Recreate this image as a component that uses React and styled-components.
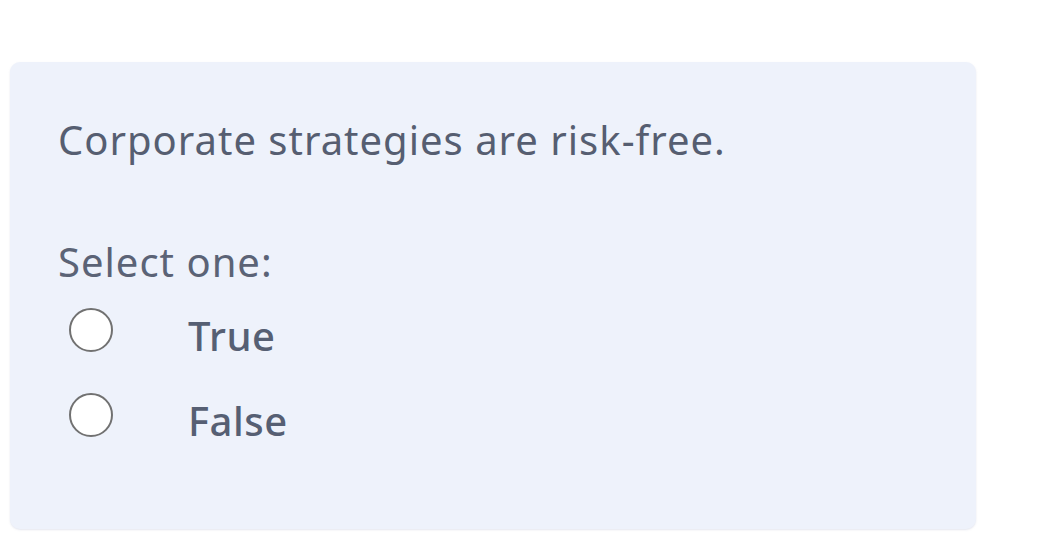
import React from 'react';
import styled, { createGlobalStyle } from 'styled-components';

const GlobalStyle = createGlobalStyle`
  body {
    margin: 0;
    background: #ffffff;
    font-family: "Noto Sans", "Open Sans", sans-serif;
  }
`

const Page = styled.div`
  width: 1054px;
  height: 548px;
  padding: 62px 0 0 10px;
  box-sizing: border-box;
`

const Card = styled.div`
  width: 966px;
  height: 467px;
  box-sizing: border-box;
  background: #eef2fb;
  border-radius: 10px;
  box-shadow: 0 1px 2px rgba(150, 160, 190, 0.25);
  padding: 58px 48px 0 48px;
`

const Question = styled.p`
  margin: 0;
  font-size: 40px;
  line-height: 40px;
  letter-spacing: 1px;
  color: #565e71;
`

const Prompt = styled.p`
  margin: 82px 0 0;
  font-size: 40px;
  line-height: 40px;
  letter-spacing: 1px;
  color: #5b6376;
`

const Options = styled.div`
  display: flex;
  flex-direction: column;
  gap: 41px;
  margin-top: 26px;
  padding-left: 11px;
`

const Option = styled.label`
  display: flex;
  align-items: flex-start;
  height: 44px;
`

const Radio = styled.span`
  width: 44px;
  height: 44px;
  box-sizing: border-box;
  border-radius: 50%;
  border: 2.5px solid #717171;
  background: #ffffff;
  flex-shrink: 0;
`

const OptionText = styled.span`
  margin-left: 75px;
  margin-top: 8px;
  font-size: 40px;
  line-height: 40px;
  letter-spacing: 0.5px;
  font-weight: 500;
  color: #565f73;
`

const options = ['True', 'False']

export default function App() {
  return (
    <>
      <GlobalStyle />
      <Page>
        <Card>
          <Question>Corporate strategies are risk-free.</Question>
          <Prompt>Select one:</Prompt>
          <Options>
            {options.map(o => (
              <Option key={o}>
                <Radio />
                <OptionText>{o}</OptionText>
              </Option>
            ))}
          </Options>
        </Card>
      </Page>
    </>
  )
}
